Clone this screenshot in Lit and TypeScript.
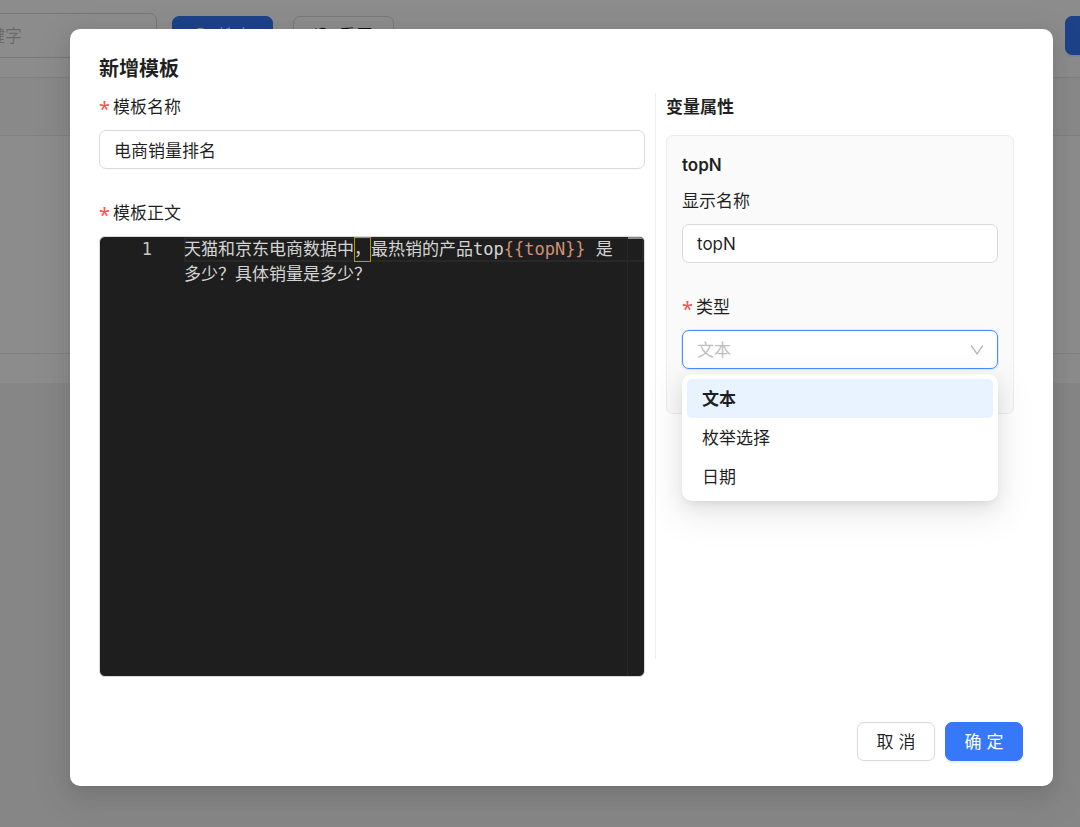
import { LitElement, html, css } from "lit";
import { customElement, state } from "lit/decorators.js";

@customElement("app-root")
export class AppRoot extends LitElement {
  @state() private type = "文本";
  private types = ["文本", "枚举选择", "日期"];

  static styles = css`
    :host {
      display: block;
      position: relative;
      min-height: 100vh;
      overflow: hidden;
      background: #f5f5f5;
      color: rgba(0, 0, 0, 0.88);
      font: 17px/28px Inter, "Noto Sans CJK SC", sans-serif;
    }
    * { box-sizing: border-box; }
    h2, h3, h4, ul { margin: 0; padding: 0; }
    input, select, button { font: inherit; color: inherit; }

    .page { background: #fff; padding-bottom: 29px; }
    .toolbar {
      display: flex;
      align-items: flex-start;
      height: 77px;
      padding-top: 16px;
      margin-left: -95px;
      margin-right: -80px;
    }
    .toolbar .search { width: 252px; height: 45px; margin: -3px 15px 0 0; }
    .toolbar .btn { width: 101px; margin-right: 20px; }
    .toolbar .add { margin: 0 0 0 auto; width: 95px; }
    .thead { height: 59px; background: #fafafa; border: 1px solid #eaeaea; border-width: 1px 0; }
    .tbody { height: 218px; border-bottom: 1px solid #eaeaea; }

    .mask {
      position: absolute;
      inset: 0;
      padding: 29px 27px 41px 70px;
      background: rgba(0, 0, 0, 0.45);
    }
    .dialog {
      background: #fff;
      border-radius: 10px;
      padding: 25px 30px 25px 29px;
      box-shadow: 0 7px 20px rgba(0, 0, 0, 0.08), 0 4px 8px -5px rgba(0, 0, 0, 0.12),
        0 11px 34px 10px rgba(0, 0, 0, 0.05);
    }
    .title { font-size: 20px; line-height: 31px; font-weight: 600; margin-bottom: 8px; }
    .body { display: grid; grid-template-columns: minmax(0, 1fr) 368px; align-items: start; }
    .left { padding-right: 10px; }
    .right { min-height: 566px; padding: 0 9px 0 10px; border-left: 1px solid #f0f0f0; }
    .field { margin-bottom: 30px; }
    .label { display: flex; gap: 5px; margin-bottom: 9px; }
    .star { width: 9px; color: #ff4d4f; font: 20px/32px "Noto Sans", sans-serif; height: 28px; }

    .input {
      display: block;
      width: 100%;
      height: 39px;
      padding: 0 14px;
      border: 1px solid #d9d9d9;
      border-radius: 7px;
      background: #fff;
      outline: none;
    }
    .input::placeholder { color: rgba(0, 0, 0, 0.25); opacity: 1; }

    .editor {
      position: relative;
      display: grid;
      grid-template-columns: 52px 1fr;
      column-gap: 32px;
      height: 441px;
      border: 1px solid #d9d9d9;
      border-radius: 6px;
      background: #1e1e1e;
      color: #d4d4d4;
      overflow: hidden;
      font: 17px/25px "DejaVu Sans Mono", "Noto Sans CJK SC", monospace;
    }
    .num { text-align: right; color: #c6c6c6; }
    .code { position: relative; padding-right: 16px; outline: none; }
    .current {
      position: absolute;
      inset: 0 0 auto;
      height: 25px;
      border: 2px solid #282828;
    }
    .text { position: relative; }
    .token { color: #ce9178; }
    .mark { display: inline-block; box-shadow: inset 0 0 0 1px #b89500; }
    .ruler { position: absolute; inset: 0 0 0 auto; width: 17px; border-left: 1px solid #282828; }
    .thumb { height: 2px; background: #8a8a8a; }

    .props { font-size: 17px; font-weight: 600; margin-bottom: 14px; }
    .card { padding: 15px 15px 14px; border: 1px solid #ececec; border-radius: 7px; background: #fafafa; }
    .var { font-size: 17px; font-weight: 600; margin-bottom: 8px; }

    .picker { position: relative; }
    .select {
      appearance: none;
      border-color: #4a8dff;
      color: #bfbfbf;
      box-shadow: 0 0 0 1px #dbe9ff;
    }
    .arrow { position: absolute; right: 14px; top: 13px; pointer-events: none; }
    .menu {
      position: absolute;
      inset: 44px 0 auto;
      padding: 5px;
      list-style: none;
      background: #fff;
      border-radius: 10px;
      box-shadow: 0 7px 20px rgba(0, 0, 0, 0.08), 0 4px 8px -5px rgba(0, 0, 0, 0.12),
        0 11px 34px 10px rgba(0, 0, 0, 0.05);
    }
    .option { padding: 6px 15px 5px; border-radius: 5px; cursor: pointer; }
    .option.on { background: #e8f3ff; font-weight: 600; }

    .footer { display: flex; justify-content: flex-end; gap: 10px; margin-top: 15px; }
    .btn {
      display: flex;
      align-items: center;
      justify-content: center;
      gap: 8px;
      width: 78px;
      height: 39px;
      padding: 0;
      border: 1px solid #d9d9d9;
      border-radius: 7px;
      background: #fff;
      box-shadow: 0 2px 0 rgba(0, 0, 0, 0.02);
    }
    .primary { border-color: #3678f8; background: #3678f8; color: #fff; box-shadow: 0 2px 0 rgba(5, 145, 255, 0.1); }
  `;

  render() {
    return html`
      <div class="page" inert>
        <div class="toolbar">
          <input class="input search" aria-label="关键字" placeholder="请输入关键字" />
          <button class="btn primary">
            <svg width="17" height="17" viewBox="0 0 17 17" fill="none" stroke="currentColor" stroke-width="1.5"><circle cx="7.5" cy="7.5" r="6" /><path d="M12 12l4 4" /></svg>搜索
          </button>
          <button class="btn">
            <svg width="17" height="17" viewBox="0 0 17 17" fill="none" stroke="currentColor" stroke-width="1.8"><path d="M2.500 5a6.800 6.800 0 1 1-.5 6M2 1.500V5.500H6" /></svg>重置
          </button>
          <button class="btn primary add" aria-label="新增"></button>
        </div>
        <div class="thead"></div>
        <div class="tbody"></div>
      </div>
      <div class="mask">
        <section class="dialog" role="dialog" aria-labelledby="title">
          <h2 class="title" id="title">新增模板</h2>
          <div class="body">
            <div class="left">
              <div class="field">
                <label class="label" for="name"><span class="star">*</span>模板名称</label>
                <input class="input" id="name" value="电商销量排名" />
              </div>
              <div class="field">
                <div class="label" id="content"><span class="star">*</span>模板正文</div>
                <div class="editor">
                  <div class="num">1</div>
                  <div class="code">
                    <div class="current"></div>
                    <div class="text" role="textbox" aria-labelledby="content">天猫和京东电商数据中<span class="mark">，</span>最热销的产品top<span class="token">{{topN}}</span> 是多少？具体销量是多少？</div>
                  </div>
                  <div class="ruler"><div class="thumb"></div></div>
                </div>
              </div>
            </div>
            <div class="right">
              <h3 class="props">变量属性</h3>
              <div class="card">
                <h4 class="var">topN</h4>
                <div class="field">
                  <label class="label" for="display">显示名称</label>
                  <input class="input" id="display" value="topN" />
                </div>
                <div class="field">
                  <label class="label" for="type"><span class="star">*</span>类型</label>
                  <div class="picker">
                    <select class="input select" id="type" .value=${this.type}>
                      ${this.types.map((t) => html`<option ?selected=${t === this.type}>${t}</option>`)}
                    </select>
                    <svg class="arrow" width="14" height="14" viewBox="0 0 14 14" fill="none" stroke="#b8b8b8" stroke-width="1.4"><path d="M1.200 2.500L7 10.800L12.800 2.500" /></svg>
                    <ul class="menu" role="listbox">
                      ${this.types.map(
                        (t) => html`<li
                          class="option ${t === this.type ? "on" : ""}"
                          role="option"
                          aria-selected=${t === this.type}
                          @click=${() => (this.type = t)}
                        >${t}</li>`
                      )}
                    </ul>
                  </div>
                </div>
              </div>
            </div>
          </div>
          <div class="footer">
            <button class="btn">取 消</button>
            <button class="btn primary">确 定</button>
          </div>
        </section>
      </div>
    `;
  }
}
